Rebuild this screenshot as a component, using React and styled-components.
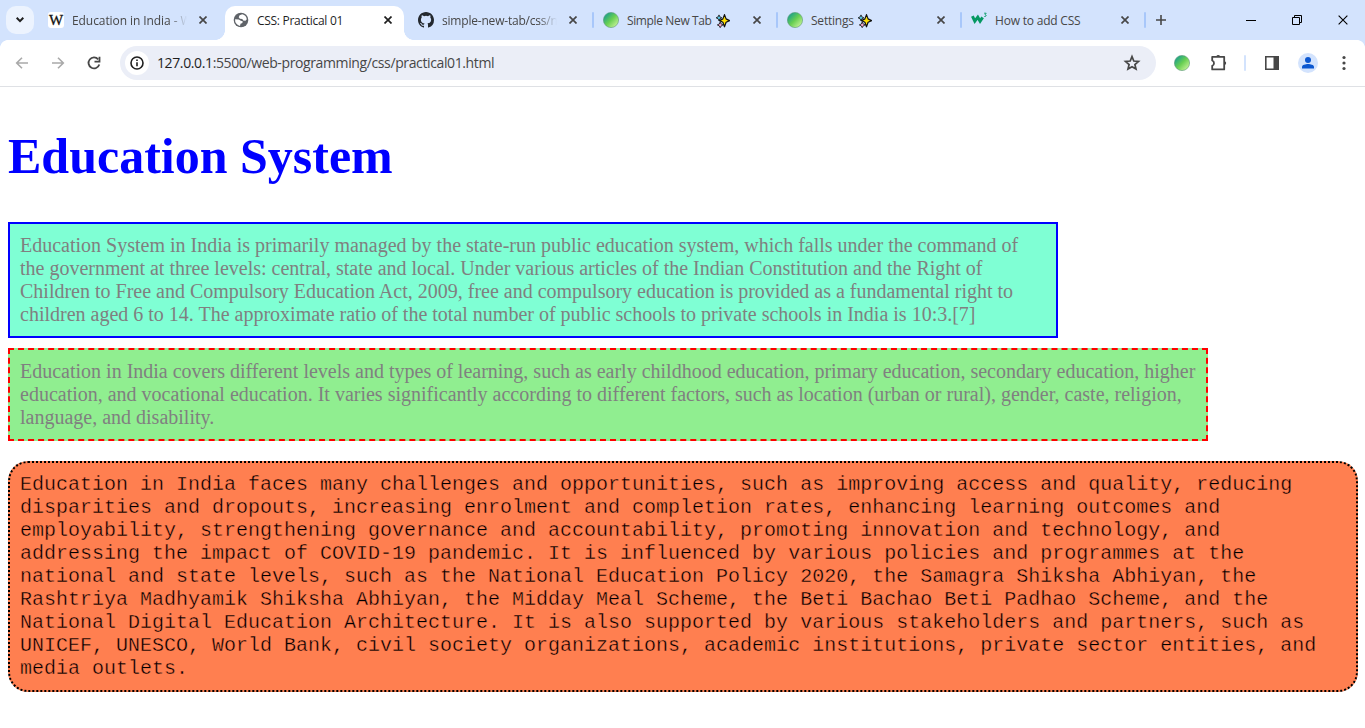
import React from "react";
import styled, { createGlobalStyle, css } from "styled-components";

const Global = createGlobalStyle`
  *, *::before, *::after { box-sizing: border-box; }
  html, body { margin: 0; background: #fff; overflow: hidden; }
  svg { display: block; flex: none; }
`;

const Window = styled.div`
  width: 1365px;
  height: 728px;
  display: flex;
  flex-direction: column;
  background: #fff;
  font-family: "Open Sans", "Noto Sans", sans-serif;
`;

const TabStrip = styled.header`
  height: 40px;
  flex: none;
  display: flex;
  align-items: stretch;
  background: #d3e3fd;
`;

const TabSearch = styled.button`
  width: 28px;
  height: 28px;
  margin: 6px 5px 0 6px;
  padding: 0;
  border: 0;
  border-radius: 10px;
  background: #ecf3fe;
  display: grid;
  place-items: center;
`;

const Tab = styled.div`
  position: relative;
  width: ${(p) => p.$width}px;
  flex: none;
  margin-top: 6px;
  padding: 0 0 6px ${(p) => p.$inset || 9}px;
  display: flex;
  align-items: center;
  color: ${(p) => (p.$active ? "#1f1f1f" : "#474747")};
  ${(p) =>
    p.$active &&
    css`
      background: #fff;
      border-radius: 10px 10px 0 0;
      &::before,
      &::after {
        content: "";
        position: absolute;
        bottom: 0;
        width: 10px;
        height: 10px;
      }
      &::before {
        left: -10px;
        background: radial-gradient(circle at 0 0, transparent 9.6px, #fff 10.2px);
      }
      &::after {
        right: -10px;
        background: radial-gradient(circle at 100% 0, transparent 9.6px, #fff 10.2px);
      }
    `}
`;

const Favicon = styled.span`
  width: 16px;
  height: 16px;
  margin-right: 8px;
  flex: none;
  display: grid;
  place-items: center;
`;

const WikiMark = styled.span`
  width: 16px;
  height: 16px;
  border-radius: 3px;
  background: #fff;
  color: #111;
  font: 15px/16px "Liberation Serif", serif;
  -webkit-text-stroke: 0.3px #111;
  display: flex;
  justify-content: center;
`;

const TabTitle = styled.span`
  width: 115px;
  height: 18px;
  margin-top: 1px;
  overflow: hidden;
  display: flex;
  align-items: center;
  gap: 4px;
  white-space: nowrap;
  font-size: 12px;
  line-height: 18px;
  letter-spacing: ${(p) => p.$tracking || 0}px;
  ${(p) => p.$fade && "mask-image: linear-gradient(90deg, #000 84%, transparent 100%);"}
`;

const CloseSlot = styled.span`
  width: 16px;
  height: 16px;
  margin-left: ${(p) => p.$left || 7}px;
  display: grid;
  place-items: center;
`;

const Divider = styled.i`
  width: 2px;
  height: 16px;
  flex: none;
  margin: ${(p) => p.$margin};
  border-radius: 1px;
  background: ${(p) => p.$color};
`;

const NewTab = styled.span`
  margin: 14px 0 0 9px;
`;

const WindowControls = styled.div`
  margin: 0 -1px 0 auto;
  display: flex;
  align-items: center;
  & > * { width: 46px; display: grid; place-items: center; }
`;

const Toolbar = styled.nav`
  height: 47px;
  flex: none;
  display: flex;
  align-items: center;
  border-bottom: 1px solid #dfe1e5;
  position: relative;
  &::before,
  &::after {
    content: "";
    position: absolute;
    top: 0;
    width: 8px;
    height: 8px;
  }
  &::before {
    left: 0;
    background: radial-gradient(circle at 100% 100%, transparent 7.6px, #d3e3fd 8.2px);
  }
  &::after {
    right: 0;
    background: radial-gradient(circle at 0 100%, transparent 7.6px, #d3e3fd 8.2px);
  }
`;

const NavButtons = styled.div`
  width: 120px;
  padding-left: 12px;
  display: flex;
  gap: 16px;
`;

const AddressBar = styled.div`
  width: 1036px;
  height: 34px;
  border-radius: 17px;
  padding: 0 15px 0 5px;
  background: #ebeef7;
  display: flex;
  align-items: center;
`;

const SiteInfo = styled.span`
  width: 24px;
  height: 24px;
  border-radius: 50%;
  background: #fff;
  display: grid;
  place-items: center;
`;

const Url = styled.span`
  flex: 1;
  margin-left: 8px;
  font-size: 14px;
  line-height: 20px;
  letter-spacing: -0.38px;
  color: #474747;
  b { font-weight: 400; color: #1f1f1f; }
`;

const Actions = styled.div`
  flex: 1;
  display: flex;
  align-items: center;
`;

const Slot = styled.span`
  margin-left: ${(p) => p.$left}px;
`;

const Avatar = styled.span`
  width: 20px;
  height: 20px;
  margin-left: 18px;
  border-radius: 50%;
  background: #d3e3fd;
  display: grid;
  place-items: center;
`;

const Page = styled.main`
  padding: 0 8px;
  font-family: "Liberation Serif", "Times New Roman", serif;
`;

const Heading = styled.h1`
  margin: 41px 0 37px;
  color: #00f;
  font-size: 50px;
  line-height: 57px;
  font-weight: 700;
`;

const Paragraph = styled.p`
  width: ${(p) => p.$width}px;
  margin: 0 0 ${(p) => p.$after}px;
  padding: 10px;
  border: 2px ${(p) => p.$border};
  border-radius: ${(p) => p.$radius || 0}px;
  background: ${(p) => p.$fill};
  color: ${(p) => p.$ink || "#808080"};
  font-size: 20px;
  line-height: 23px;
  ${(p) =>
    p.$mono &&
    css`
      font-family: "Courier New", "Liberation Mono", monospace;
      -webkit-text-stroke: 0.4px ${p.$fill};
    `}
`;

const Cross = ({ size = 8, weight = 1.7, color = "#444" }) => (
  <svg width={size} height={size} viewBox="0 0 8 8" stroke={color} strokeWidth={weight}>
    <path d="M.5.5l7 7M7.5.5l-7 7" />
  </svg>
);

const Globe = () => (
  <svg width="16" height="16" viewBox="0 0 16 16">
    <circle cx="8" cy="8" r="7.3" fill="#5f6368" />
    <path d="M9.3 2.2L6.6 3.3 5.7 5.2l1.2 1.6 2.4.1.9 1.6 2.3.2 1.3-1.4A6 6 0 0 0 9.3 2.2zM2.1 7.3l3.7.1 2 1.3 1.9.5-.3 1.8-1.9.7-.5 2.2A6 6 0 0 1 2.1 7.3z" fill="#fff" />
  </svg>
);

const Github = () => (
  <svg width="16" height="16" viewBox="0 0 16 16" fill="#24292f">
    <path d="M8 0C3.58 0 0 3.58 0 8c0 3.54 2.29 6.53 5.47 7.59.4.07.55-.17.55-.38 0-.19-.01-.82-.01-1.49-2.01.37-2.53-.49-2.69-.94-.09-.23-.48-.94-.82-1.13-.28-.15-.68-.52-.01-.53.63-.01 1.08.58 1.23.82.72 1.21 1.87.87 2.33.66.07-.52.28-.87.51-1.07-1.78-.2-3.64-.89-3.64-3.95 0-.87.31-1.59.82-2.15-.08-.2-.36-1.02.08-2.12 0 0 .67-.21 2.2.82a7.6 7.6 0 0 1 4 0c1.53-1.04 2.2-.82 2.2-.82.44 1.1.16 1.92.08 2.12.51.56.82 1.27.82 2.15 0 3.07-1.87 3.75-3.65 3.95.29.25.54.73.54 1.48 0 1.07-.01 1.93-.01 2.2 0 .21.15.46.55.38A8.01 8.01 0 0 0 16 8c0-4.42-3.58-8-8-8z" />
  </svg>
);

const GreenDisc = () => (
  <svg width="16" height="16" viewBox="0 0 16 16">
    <defs>
      <linearGradient id="disc" x1=".1" y1=".1" x2=".9" y2=".9">
        <stop offset="0" stopColor="#159c91" />
        <stop offset=".5" stopColor="#68cf52" />
        <stop offset="1" stopColor="#c9f49a" />
      </linearGradient>
    </defs>
    <circle cx="8" cy="8" r="7.6" fill="url(#disc)" stroke="#5c9877" strokeWidth=".6" />
  </svg>
);

const Sparkles = () => (
  <svg width="14" height="14" viewBox="0 0 14 14" strokeLinejoin="round">
    <path d="M3 .9l.9 2 2 .9-2 .9L3 6.8l-.9-2-2-1 2-.9z" fill="#55c8e8" stroke="#222" strokeWidth=".9" />
    <path d="M4.2 8l1 2 2 .9-2 1-1 1.8-.9-1.8-2-1 2-.9z" fill="#f6a6c8" stroke="#222" strokeWidth=".9" />
    <path d="M8.5.6l1.6 4.3 3.5 1.7-3.5 1.7-1.6 4.5-1.6-4.5-3.5-1.7 3.5-1.7z" fill="#ffe000" stroke="#111" strokeWidth="1.2" />
  </svg>
);

const SchoolsMark = () => (
  <svg width="16" height="16" viewBox="0 0 16 16" fill="none" stroke="#059862">
    <path d="M1.4 4.2l2.4 5 3-4 2.3 4L11.6 5.4" strokeWidth="3" />
    <path d="M13.1 1.2h2.1l-1.2 1.5c1.7.1 1.6 2.1-.7 1.8" strokeWidth=".9" />
  </svg>
);

const Arrow = ({ flip }) => (
  <svg width="20" height="20" viewBox="0 0 20 20" fill="none" stroke="#a9a9a9" strokeWidth="1.6" transform={flip ? "scale(-1 1)" : undefined}>
    <path d="M16 10H5M10 4.7L4.7 10l5.3 5.3" />
  </svg>
);

const Reload = () => (
  <svg width="20" height="20" viewBox="0 0 20 20" fill="none" stroke="#474747" strokeWidth="1.8">
    <path d="M14.2 6.3A5.5 5.5 0 1 0 15.3 11.5" />
    <path d="M15.5 3.8v4.9h-5" />
  </svg>
);

const tabs = [
  { title: "Education in India - W", icon: <WikiMark>W</WikiMark>, width: 186, fade: true, tracking: -0.08, gap: 8 },
  { title: "CSS: Practical 01", icon: <Globe />, width: 179, inset: 8, gap: 8, active: true, tracking: -0.3 },
  { title: "simple-new-tab/css/ne", icon: <Github />, width: 188, inset: 14, gap: 8, fade: true, tracking: -0.2 },
  { title: "Simple New Tab", icon: <GreenDisc />, width: 182, sparkle: true, divided: true, tracking: -0.37 },
  { title: "Settings", icon: <GreenDisc />, width: 182, sparkle: true, divided: true, tracking: -0.22 },
  { title: "How to add CSS", icon: <SchoolsMark />, width: 182, divided: true, tracking: -0.2 },
];

export default function App() {
  return (
    <>
      <Global />
      <Window>
        <TabStrip>
          <TabSearch>
            <svg width="8" height="6" viewBox="0 0 8 6" fill="none" stroke="#1f1f1f" strokeWidth="2">
              <path d="M.7.8L4 4.1 7.3.8" />
            </svg>
          </TabSearch>
          {tabs.map((t) => (
            <React.Fragment key={t.title}>
              {t.divided && <Divider $margin="12px 0 0" $color="#a8c7fa" />}
              <Tab $width={t.width} $inset={t.inset} $active={t.active}>
                <Favicon>{t.icon}</Favicon>
                <TabTitle $fade={t.fade} $tracking={t.tracking}>
                  {t.title}
                  {t.sparkle && <Sparkles />}
                </TabTitle>
                <CloseSlot $left={t.gap}>
                  <Cross color={t.active ? "#1f1f1f" : "#474747"} />
                </CloseSlot>
              </Tab>
            </React.Fragment>
          ))}
          <Divider $margin="12px 0 0" $color="#a8c7fa" />
          <NewTab>
            <svg width="12" height="12" viewBox="0 0 12 12" stroke="#474747" strokeWidth="1.6">
              <path d="M6 1v10M1 6h10" />
            </svg>
          </NewTab>
          <WindowControls>
            <span>
              <svg width="10" height="10" viewBox="0 0 10 10"><path d="M0 5.5h10" stroke="#000" /></svg>
            </span>
            <span>
              <svg width="10" height="10" viewBox="0 0 10 10" fill="none" stroke="#000">
                <path d="M.5 2.5h7v7h-7zM2.5 2.5v-2h7v7h-2" />
              </svg>
            </span>
            <span><Cross size={10} weight={0.9} color="#000" /></span>
          </WindowControls>
        </TabStrip>

        <Toolbar>
          <NavButtons>
            <Arrow />
            <Arrow flip />
            <Reload />
          </NavButtons>
          <AddressBar>
            <SiteInfo>
              <svg width="14" height="14" viewBox="0 0 14 14" fill="none" stroke="#1f1f1f" strokeWidth="1.6">
                <circle cx="7" cy="7" r="6" />
                <path d="M7 6.2v4M7 3.6v1.5" />
              </svg>
            </SiteInfo>
            <Url><b>127.0.0.1</b>:5500/web-programming/css/practical01.html</Url>
            <svg width="18" height="18" viewBox="0 0 18 18" fill="none" stroke="#474747" strokeWidth="1.7">
              <path d="M9 2.6l1.8 4.4 4.7.4-3.6 3.1 1.1 4.6L9 12.7l-4 2.4 1.1-4.6-3.6-3.1 4.7-.4z" />
            </svg>
          </AddressBar>
          <Actions>
            <Slot $left={18}><GreenDisc /></Slot>
            <Slot $left={19}>
              <svg width="20" height="20" viewBox="0 0 20 20">
                <path d="M3.2 3.8h12v12.6h-12v-3.6c2.4-.9 2.4-4.4 0-5.3z" fill="none" stroke="#474747" strokeWidth="1.8" strokeLinejoin="round" />
                <path d="M7.3 3.3a2 2 0 0 1 3.8 0zM15.8 8.2a2 2 0 0 1 0 3.8z" fill="#474747" />
              </svg>
            </Slot>
            <Divider $margin="0 0 0 15px" $color="#d3e3fd" />
            <Slot $left={18}>
              <svg width="16" height="16" viewBox="0 0 16 16">
                <path d="M1.8 1.8h12.4v12.4H1.8z" fill="none" stroke="#474747" strokeWidth="1.6" />
                <path d="M9.5 1.5h5v13h-5z" fill="#474747" />
              </svg>
            </Slot>
            <Avatar>
              <svg width="14" height="14" viewBox="0 0 14 14" fill="#0b57d0">
                <circle cx="7" cy="4" r="3" />
                <path d="M1 12.5v-1.7C1 9 4.6 8 7 8s6 1 6 2.8v1.7z" />
              </svg>
            </Avatar>
            <Slot $left={24}>
              <svg width="4" height="16" viewBox="0 0 4 16" fill="#474747">
                <circle cx="2" cy="2.5" r="1.6" />
                <circle cx="2" cy="8" r="1.6" />
                <circle cx="2" cy="13.5" r="1.6" />
              </svg>
            </Slot>
          </Actions>
        </Toolbar>

        <Page>
          <Heading>Education System</Heading>
          <Paragraph $width={1050} $after={10} $border="solid #00f" $fill="aquamarine">
            Education System in India is primarily managed by the state-run public education system, which falls under the command of the government at three levels: central, state and local. Under various articles of the Indian Constitution and the Right of Children to Free and Compulsory Education Act, 2009, free and compulsory education is provided as a fundamental right to children aged 6 to 14. The approximate ratio of the total number of public schools to private schools in India is 10:3.[7]
          </Paragraph>
          <Paragraph $width={1200} $after={20} $border="dashed #f00" $fill="lightgreen">
            Education in India covers different levels and types of learning, such as early childhood education, primary education, secondary education, higher education, and vocational education. It varies significantly according to different factors, such as location (urban or rural), gender, caste, religion, language, and disability.
          </Paragraph>
          <Paragraph $width={1350} $after={0} $border="dotted #000" $radius={20} $fill="coral" $ink="#000" $mono>
            Education in India faces many challenges and opportunities, such as improving access and quality, reducing disparities and dropouts, increasing enrolment and completion rates, enhancing learning outcomes and employability, strengthening governance and accountability, promoting innovation and technology, and addressing the impact of COVID-19 pandemic. It is influenced by various policies and programmes at the national and state levels, such as the National Education Policy 2020, the Samagra Shiksha Abhiyan, the Rashtriya Madhyamik Shiksha Abhiyan, the Midday Meal Scheme, the Beti Bachao Beti Padhao Scheme, and the National Digital Education Architecture. It is also supported by various stakeholders and partners, such as UNICEF, UNESCO, World Bank, civil society organizations, academic institutions, private sector entities, and media outlets.
          </Paragraph>
        </Page>
      </Window>
    </>
  );
}
